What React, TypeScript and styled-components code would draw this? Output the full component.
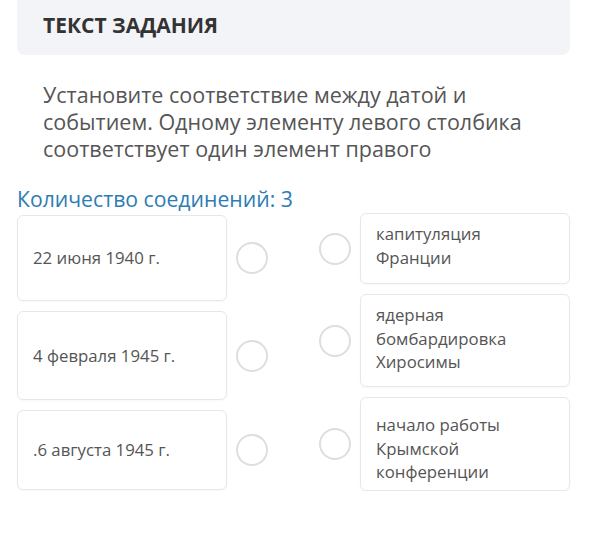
import styled, {createGlobalStyle} from "styled-components";

const GlobalStyle = createGlobalStyle`
  body {
    margin: 0;
    background: #ffffff;
    font-family: "Open Sans", "Noto Sans", sans-serif;
  }
`;

const StyledPage = styled.div`
  width: 589px;
  padding: 0 19px 0 17px;
  box-sizing: border-box;
`;

const StyledHeader = styled.div`
  height: 55px;
  background-color: #f3f4f7;
  border-radius: 0 0 8px 8px;
  box-sizing: border-box;
  padding: 11px 26px 0;
`;

const StyledTitle = styled.div`
  font-size: 21px;
  font-weight: 700;
  color: #333333;
  line-height: 28px;
`;

const StyledTask = styled.p`
  margin: 26px 0 0;
  padding: 0 26px;
  font-size: 21.5px;
  line-height: 27px;
  color: #555555;
`;

const StyledCount = styled.div`
  margin-top: 23px;
  font-size: 21.2px;
  line-height: 27px;
  color: #2d7cb3;
`;

const StyledColumns = styled.div`
  display: grid;
  grid-template-columns: 1fr 1fr;
  column-gap: 51px;
  margin-top: 1px;
`;

const StyledColumn = styled.div<{ $offset?: number }>`
  display: flex;
  flex-direction: column;
  gap: 10px;
  padding-top: ${props => props.$offset || 0}px;
`;

const StyledRow = styled.div`
  display: flex;
  align-items: center;
  gap: 9px;
`;

const StyledCard = styled.div<{ $h: number, $top?: number }>`
  flex: 1;
  height: ${props => props.$h}px;
  box-sizing: border-box;
  border: 1px solid #e6e7ea;
  border-radius: 6px;
  display: flex;
  align-items: ${props => props.$top !== undefined ? "flex-start" : "center"};
  padding: ${props => props.$top !== undefined ? `${props.$top}px 15px 0` : "0 15px"};
  font-size: 16.8px;
  line-height: 23.5px;
  color: #555555;
  box-shadow: 0 1px 2px rgba(0, 0, 0, 0.03);
`;

const StyledCircle = styled.div`
  width: 32px;
  height: 32px;
  flex-shrink: 0;
  box-sizing: border-box;
  border: 2.5px solid #dcdedf;
  border-radius: 50%;
`;

const dates = [
    {text: "22 июня 1940 г.", h: 86},
    {text: "4 февраля 1945 г.", h: 89},
    {text: ".6 августа 1945 г.", h: 80},
];

const events = [
    {text: <>капитуляция<br/>Франции</>, h: 71, top: 8},
    {text: <>ядерная<br/>бомбардировка<br/>Хиросимы</>, h: 93, top: 8},
    {text: <>начало работы<br/>Крымской<br/>конференции</>, h: 94, top: 15},
];

export default function App() {
    return (
        <StyledPage>
            <GlobalStyle/>
            <StyledHeader>
                <StyledTitle>ТЕКСТ ЗАДАНИЯ</StyledTitle>
            </StyledHeader>
            <StyledTask>
                Установите соответствие между датой и событием. Одному элементу левого столбика
                соответствует один элемент правого
            </StyledTask>
            <StyledCount>Количество соединений: 3</StyledCount>
            <StyledColumns>
                <StyledColumn $offset={2}>
                    {dates.map((item, index) => (
                        <StyledRow key={index}>
                            <StyledCard $h={item.h}>{item.text}</StyledCard>
                            <StyledCircle/>
                        </StyledRow>
                    ))}
                </StyledColumn>
                <StyledColumn>
                    {events.map((item, index) => (
                        <StyledRow key={index}>
                            <StyledCircle/>
                            <StyledCard $h={item.h} $top={item.top}>
                                <div>{item.text}</div>
                            </StyledCard>
                        </StyledRow>
                    ))}
                </StyledColumn>
            </StyledColumns>
        </StyledPage>
    )
}
